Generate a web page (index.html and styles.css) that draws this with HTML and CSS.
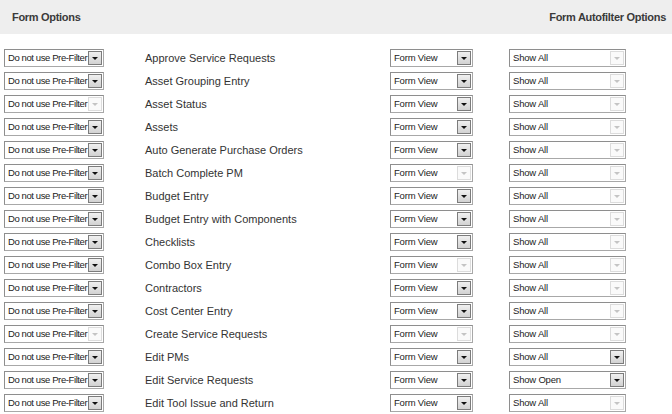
FILE: index.html
```html
<!DOCTYPE html>
<html lang="en">

<head>
    <meta charset="UTF-8">
    <title>Form Options</title>
    <link rel="stylesheet" href="styles.css">
</head>

<body>
    <div class="header">
        <span>Form Options</span>
        <span>Form Autofilter Options</span>
    </div>

    <div class="options"></div>

    <script>
        // [form name, prefilter arrow on, view arrow on, autofilter text, autofilter arrow on]
        const forms = [
            ['Approve Service Requests', 1, 1, 'Show All', 0],
            ['Asset Grouping Entry', 1, 1, 'Show All', 0],
            ['Asset Status', 0, 1, 'Show All', 0],
            ['Assets', 1, 1, 'Show All', 0],
            ['Auto Generate Purchase Orders', 1, 1, 'Show All', 0],
            ['Batch Complete PM', 1, 0, 'Show All', 0],
            ['Budget Entry', 1, 1, 'Show All', 0],
            ['Budget Entry with Components', 1, 1, 'Show All', 0],
            ['Checklists', 1, 1, 'Show All', 0],
            ['Combo Box Entry', 1, 0, 'Show All', 0],
            ['Contractors', 1, 1, 'Show All', 0],
            ['Cost Center Entry', 1, 1, 'Show All', 0],
            ['Create Service Requests', 0, 0, 'Show All', 0],
            ['Edit PMs', 1, 1, 'Show All', 1],
            ['Edit Service Requests', 1, 1, 'Show Open', 1],
            ['Edit Tool Issue and Return', 1, 1, 'Show All', 0]
        ];

        const options = document.querySelector('.options');

        function makeSelect(cls, text, active) {
            const box = document.createElement('div');
            box.classList.add('select', cls);
            const value = document.createElement('span');
            value.classList.add('value');
            value.textContent = text;
            const arrow = document.createElement('span');
            arrow.classList.add('arrow');
            if (!active) arrow.classList.add('off');
            box.appendChild(value);
            box.appendChild(arrow);
            return box;
        }

        forms.forEach(f => {
            const row = document.createElement('div');
            row.classList.add('row');
            row.appendChild(makeSelect('prefilter', 'Do not use Pre-Filter', f[1]));
            const label = document.createElement('span');
            label.classList.add('label');
            label.textContent = f[0];
            row.appendChild(label);
            row.appendChild(makeSelect('view', 'Form View', f[2]));
            row.appendChild(makeSelect('autofilter', f[3], f[4]));
            options.appendChild(row);
        });
    </script>
</body>

</html>
```

FILE: styles.css
```css
body {
    margin: 0;
    font-family: 'Liberation Sans', Arial, sans-serif;
    font-size: 11px;
    color: #333333;
    background-color: #ffffff;
}

.header {
    display: flex;
    justify-content: space-between;
    align-items: center;
    height: 34px;
    padding: 0 6px 0 12px;
    background-color: #eeeeee;
    font-size: 11px;
    font-weight: bold;
    letter-spacing: -0.3px;
    color: #3a3a3a;
}

.options {
    margin-top: 12px;
    padding-left: 4px;
}

.row {
    display: grid;
    grid-template-columns: 141px 245px 119px 117px;
    align-items: center;
    height: 23px;
}

.select {
    display: flex;
    align-items: center;
    box-sizing: border-box;
    height: 18px;
    border: 1px solid #a8a8a8;
    border-top-color: #8e8e8e;
    border-left-color: #8e8e8e;
    background-color: #ffffff;
    color: #222222;
    font-size: 9.5px;
    letter-spacing: -0.2px;
}

.prefilter {
    width: 100px;
    letter-spacing: -0.4px;
}

.view {
    width: 83px;
}

.autofilter {
    width: 117px;
}

.value {
    flex: 1;
    padding-left: 3px;
    white-space: nowrap;
    overflow: hidden;
}

.arrow {
    position: relative;
    flex: none;
    box-sizing: border-box;
    width: 14px;
    height: 14px;
    margin-right: 1px;
    border: 1px solid #7c7c7c;
    background: linear-gradient(#f0f0f0, #d2d2d2);
}

.arrow::after {
    content: '';
    position: absolute;
    left: 3px;
    top: 5px;
    border-left: 3px solid transparent;
    border-right: 3px solid transparent;
    border-top: 3px solid #111111;
}

.arrow.off {
    border-color: #dcdcdc;
    background: #fafafa;
}

.arrow.off::after {
    border-top-color: #c4c4c4;
}

.label {
    color: #333333;
    font-size: 11px;
}
```
